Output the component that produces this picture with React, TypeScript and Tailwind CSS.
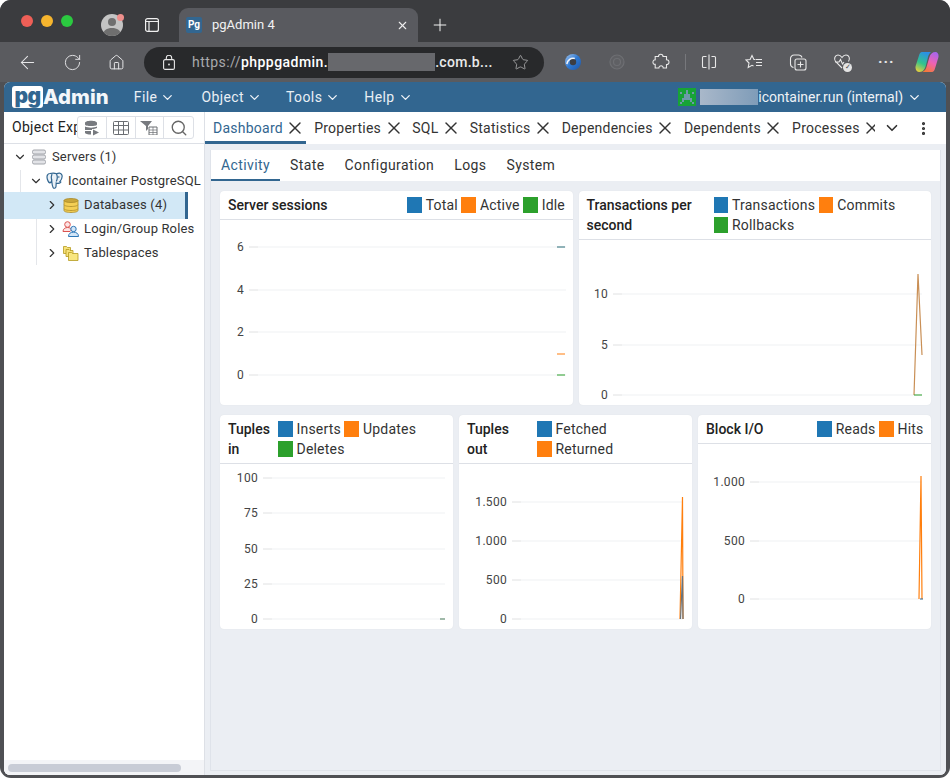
import { ArrowLeft, ChevronDown, ChevronRight, EllipsisVertical, Home, Plus, RotateCw, Search, Star, X } from "lucide-react";

const BLUE = "#1f77b4";
const ORANGE = "#ff7f0e";
const GREEN = "#2ca02c";

type Seg = { points: string; color: string };
type ChartProps = {
  height: number;
  labelRight: number;
  gridRight: number;
  ticks: [string, number][];
  lines: Seg[];
};

function Chart({ height, labelRight, gridRight, ticks, lines }: ChartProps) {
  return (
    <svg className="block w-full" height={height} style={{ fontFamily: "Roboto, sans-serif" }}>
      {ticks.map(([label, y]) => (
        <g key={label}>
          <line x1={labelRight + 5} x2={gridRight} y1={y} y2={y} stroke="#eff1f3" strokeWidth="1" />
          <line x1={labelRight + 5} x2={labelRight + 14} y1={y} y2={y} stroke="#e8e8e8" strokeWidth="1" />
          <text x={labelRight} y={y + 4} textAnchor="end" fontSize="12" letterSpacing="0.3" fill="#444">
            {label}
          </text>
        </g>
      ))}
      {lines.map((l, i) => (
        <polyline key={i} points={l.points} fill="none" stroke={l.color} strokeWidth="1.2" />
      ))}
    </svg>
  );
}

function Legend({ color, label }: { color: string; label: string }) {
  return (
    <span className="mr-[3.5px] flex h-[20px] items-center gap-[4px]">
      <span className="h-[16px] w-[14.5px] shrink-0" style={{ background: color }} />
      <span className="tracking-[0.2px] text-[#333]">{label}</span>
    </span>
  );
}

function Card({
  title,
  titleClass,
  legendClass,
  legend,
  children,
}: {
  title: string;
  titleClass: string;
  legendClass: string;
  legend: [string, string][];
  children: React.ReactNode;
}) {
  return (
    <div className="h-[214px] overflow-hidden rounded-[4px] bg-white shadow-[0_0_1px_#d5d9e0]">
      <div className="flex items-start border-b border-[#dde0e6] pb-[4px] pl-[8px] pr-[4px] pt-[4px] text-[14px] leading-[20px]">
        <div className={`font-medium text-[#222] ${titleClass}`}>{title}</div>
        <div className={`flex flex-1 flex-wrap ${legendClass}`}>
          {legend.map(([c, l]) => (
            <Legend key={l} color={c} label={l} />
          ))}
        </div>
      </div>
      {children}
    </div>
  );
}

function TreeRow({ indent, chevron, icon, label, selected }: { indent: string; chevron: "down" | "right"; icon: React.ReactNode; label: string; selected?: boolean }) {
  return (
    <div className={`relative flex items-center ${selected ? "-my-[1.5px] h-[27px] w-[184px] border-r-[3px] border-[#326690] bg-[#d2e8f6]" : "h-[24px]"} ${indent} whitespace-nowrap text-[13px] tracking-[0.15px] text-[#333]`}>
      {chevron === "down" ? <ChevronDown size={14} className="mr-[3px] shrink-0 text-[#333]" /> : <ChevronRight size={14} className="mr-[3px] shrink-0 text-[#333]" />}
      <span className="mr-[4px] flex h-[18px] w-[18px] shrink-0 items-center justify-center">{icon}</span>
      {label}
    </div>
  );
}

const ServersIcon = () => (
  <svg width="16" height="16" viewBox="0 0 16 16" fill="#e2e3e7" stroke="#a2a5ab" strokeWidth="1">
    <rect x="1.500" y="1" width="13" height="4" rx="1.500" />
    <rect x="1.500" y="6" width="13" height="4" rx="1.500" />
    <rect x="1.500" y="11" width="13" height="4" rx="1.500" />
  </svg>
);
const ElephantIcon = () => (
  <svg width="18" height="18" viewBox="0 0 18 18" fill="#eaf1f7" stroke="#336791" strokeWidth="1.200">
    <path d="M4 1.500C1.500 1.500.5 4 1.300 7c.6 2.200 1.500 3.800 2.700 3.800 1 0 1.300-1.300 1.700-2.300.3 2.200.2 5 1.300 6.800 1 1.500 2.800 1.200 3-.8l.2-3.500c1.500.7 3.200.5 4.300-.5.600-.6.200-1-.5-1 1.500-2 2.600-4.500 1.900-6.500C14.900.5 12.500.800 10.500 1.800 8.500.8 6 1 4 1.500z" />
    <path d="M6 2c-1 2-.8 4.500-.3 6.500M10.500 2c1 2 1 5-.3 7.500" fill="none" />
    <circle cx="12.800" cy="5" r=".8" fill="#336791" stroke="none" />
  </svg>
);
const DatabaseIcon = () => (
  <svg width="16" height="15" viewBox="0 0 16 15" fill="#f4cf55" stroke="#a98a2a" strokeWidth=".8">
    <path d="M1 10.500v2C1 13.800 4.500 14.500 8 14.500s7-.7 7-2v-2z" />
    <path d="M1 6.500v4c0 1.300 3.500 2 7 2s7-.7 7-2v-4z" />
    <path d="M1 2.500v4c0 1.300 3.500 2 7 2s7-.7 7-2v-4z" />
    <ellipse cx="8" cy="2.500" rx="7" ry="2" fill="#c9a63a" />
  </svg>
);
const RolesIcon = () => (
  <svg width="18" height="16" viewBox="0 0 18 16" fill="none">
    <circle cx="5.500" cy="3.500" r="2.800" fill="#fde4e4" stroke="#d9534f" />
    <path d="M1 10.500c0-2.500 2-4 4.500-4S9 7.500 9.500 9L8 10.500z" fill="#fde4e4" stroke="#d9534f" />
    <circle cx="11.500" cy="8" r="2.700" fill="#d3e6f7" stroke="#2f78b7" />
    <path d="M6.500 15.500c0-3 2-4.300 5-4.300s5 1.300 5 4.300z" fill="#d3e6f7" stroke="#2f78b7" />
  </svg>
);
const TablespaceIcon = () => (
  <svg width="16" height="16" viewBox="0 0 16 16" stroke="#b59a20" strokeWidth=".8">
    <path d="M.5 1.500h3l1 1h3v6h-7z" fill="#f7e27a" />
    <path d="M3 4.500h3l1 1h3v6H3z" fill="#f7e27a" />
    <path d="M5.500 7.500h3l1 1h5.500v7H5.500z" fill="#f8e680" />
  </svg>
);

function SideTool({ children, last }: { children: React.ReactNode; last?: boolean }) {
  return <div className={`flex w-[29px] items-center justify-center ${last ? "" : "border-r border-[#dde0e6]"}`}>{children}</div>;
}

function Tab({ label, active }: { label: string; active?: boolean }) {
  return (
    <div className={`flex h-[32px] shrink-0 items-center pl-[8px] pr-[0.7px] ${active ? "border-b-[3px] border-[#326690] pt-[3px] text-[#326690]" : "text-[#333]"}`}>
      <span>{label}</span>
      <X size={20} strokeWidth={1.700} className="ml-[2.5px] text-[#333]" />
    </div>
  );
}

function SubTab({ label, active }: { label: string; active?: boolean }) {
  return (
    <div className={`flex h-[31px] items-center px-[10px] ${active ? "border-b-2 border-[#326690] pt-[2px] text-[#326690]" : "text-[#333]"}`}>
      {label}
    </div>
  );
}

function MenuItem({ label, className }: { label: string; className: string }) {
  return (
    <div className={`flex items-center gap-[3px] text-[#e9eff5] ${className}`}>
      {label}
      <ChevronDown size={15} strokeWidth={2.200} />
    </div>
  );
}

export default function App() {
  return (
    <div className="h-[780px] w-[950px] overflow-hidden bg-white text-[14px]" style={{ fontFamily: "Roboto, sans-serif" }}>
      <div className="flex h-[778px] flex-col overflow-hidden rounded-[11px] bg-[#4f5054]">
        {/* title bar */}
        <div className="flex h-[42px] shrink-0 items-end bg-[#3b3c3f] pl-[21px]">
          <div className="mb-[15px] flex gap-[8px]">
            <span className="h-[12px] w-[12px] rounded-full bg-[#ee5f57]" />
            <span className="h-[12px] w-[12px] rounded-full bg-[#f6b52e]" />
            <span className="h-[12px] w-[12px] rounded-full bg-[#2bc940]" />
          </div>
          <div className="relative mb-[6px] ml-[28px] h-[22px] w-[22px] rounded-full bg-[#c4c4c4]">
            <svg width="22" height="22" viewBox="0 0 22 22" className="overflow-hidden rounded-full">
              <circle cx="11" cy="8" r="4" fill="#6f6f6f" />
              <path d="M2 22c0-6 4-8 9-8s9 2 9 8z" fill="#6f6f6f" />
            </svg>
            <span className="absolute -right-[1px] top-0 h-[7px] w-[7px] rounded-full bg-[#ee8f8c]" />
          </div>
          <svg width="14" height="14" viewBox="0 0 14 14" fill="none" stroke="#f0f0f0" strokeWidth="1.200" className="mb-[10px] ml-[22px]">
            <rect x=".6" y=".6" width="12.800" height="12.800" rx="2" />
            <path d="M.6 3.500h12.800M4 3.500v9.900" />
          </svg>
          <div className="ml-[20px] flex h-[34px] w-[239px] items-center rounded-t-[9px] bg-[#595a5f] pl-[7px] pr-[9px]">
            <span className="flex h-[16px] w-[16px] items-center justify-center rounded-[2px] bg-[#326690] text-[10px] font-bold leading-none text-white">Pg</span>
            <span className="ml-[10px] flex-1 text-[13px] text-[#f2f2f3]">pgAdmin 4</span>
            <X size={13} className="text-[#eeeeee]" />
          </div>
          <Plus size={20} strokeWidth={1.200} className="mb-[7px] ml-[12px] text-[#f2f2f2]" />
        </div>

        {/* toolbar */}
        <div className="flex h-[40px] shrink-0 items-center bg-[#5a5b5f] text-[#e6e6e8]">
          <ArrowLeft size={21} strokeWidth={1.200} className="ml-[17px]" />
          <RotateCw size={19} strokeWidth={1.200} className="ml-[25px]" />
          <Home size={17} strokeWidth={1.400} className="ml-[26px]" />
          <div className="ml-[19px] flex h-[31px] w-[400px] items-center rounded-full bg-[#28292b] pl-[19px] pr-[15px] text-[14px] tracking-[0.45px]">
            <svg width="12" height="15" viewBox="0 0 12 15" fill="none" stroke="#e8e8e8" strokeWidth="1.100" className="mr-[17px]">
              <rect x=".6" y="4.600" width="10.800" height="9.800" rx="1.500" />
              <path d="M3.300 4.500V3a2.700 2.700 0 0 1 5.400 0v1.500" />
              <circle cx="6" cy="9.500" r=".9" fill="#e8e8e8" stroke="none" />
            </svg>
            <span className="text-[#a9aaad]">https://</span>
            <span className="font-medium text-white">phppgadmin.</span>
            <span className="h-[18px] w-[107px] bg-[#67686c]" />
            <span className="font-medium tracking-[0.3px] text-[#e9e9ea]">.com.b...</span>
            <Star size={17} strokeWidth={1.100} className="ml-auto text-[#b5b5b7]" />
          </div>
          <svg width="18" height="18" viewBox="0 0 18 18" className="ml-[20px]" fill="none">
            <defs>
              <linearGradient id="ring" x1="0" y1="0" x2="1" y2="1">
                <stop offset="0" stopColor="#9fc4ee" />
                <stop offset=".5" stopColor="#2f78d0" />
                <stop offset="1" stopColor="#1d56a8" />
              </linearGradient>
            </defs>
            <circle cx="9" cy="9" r="8" fill="url(#ring)" />
            <circle cx="9" cy="9" r="3.200" fill="#3c3d42" />
            <path d="M2.800 11c.8-4 4-6.500 8-5.500" stroke="#f2f5fa" strokeWidth="1.500" />
          </svg>
          <svg width="16" height="16" viewBox="0 0 16 16" className="ml-[27px]" fill="#5f6064" stroke="#6e6f73" strokeWidth="1.200">
            <circle cx="8" cy="8" r="7" />
            <circle cx="8" cy="8" r="3.500" fill="none" />
          </svg>
          <svg width="18" height="18" viewBox="0 0 18 18" className="ml-[27px]" fill="none" stroke="#e8e8e8" strokeWidth="1.100">
            <path d="M6.500 3.500c0-3 4.500-3 4.500 0h3.500v3.300c3.300-.3 3.300 5 0 4.700v3.500h-3.300c.2-3-4.400-3-4.300 0H3.200v-3.600c-3 .4-3-4.800 0-4.600V3.500z" />
          </svg>
          <span className="ml-[15px] h-[16px] w-px bg-[#77787c]" />
          <svg width="16" height="16" viewBox="0 0 16 16" className="ml-[15px]" fill="none" stroke="#e8e8e8" strokeWidth="1.100">
            <path d="M5.500 2.500H2.500a1 1 0 0 0-1 1v9a1 1 0 0 0 1 1h3M10.500 2.500h3a1 1 0 0 1 1 1v9a1 1 0 0 1-1 1h-3M8 .5v15" />
          </svg>
          <svg width="18" height="16" viewBox="0 0 18 16" className="ml-[28px]" fill="none" stroke="#e8e8e8" strokeWidth="1.100">
            <path d="M10.500 5.500H8.900L7 1.500 5.100 5.500 1 6l3 3-.8 4.500L7 11.300l1.500.8M11 5.500h6M11 8.500h6M11 11.500h6" />
          </svg>
          <svg width="18" height="18" viewBox="0 0 18 18" className="ml-[26px]" fill="none" stroke="#e8e8e8" strokeWidth="1.100">
            <rect x="6" y="6" width="11" height="11" rx="2" />
            <path d="M11.500 8.500v6M8.500 11.500h6M4.500 14.500C2.500 14 1.500 12.500 1.500 11V5.500a3.500 3.500 0 0 1 3.500-3.500h4.500c1.500 0 3 1 3.500 2.500" />
          </svg>
          <div className="relative ml-[26px] h-[18px] w-[19px]">
            <svg width="19" height="18" viewBox="0 0 19 18" fill="none" stroke="#e8e8e8" strokeWidth="1.100">
              <path d="M9 15 2.500 8.500C.500 6 2 2 5 2c2 0 3 1 4 2.500C10 3 11 2 13 2c3 0 4.500 3.500 2.500 6.500M2 9h4l1.500-2.500L9.500 11l1.500-2" />
            </svg>
            <span className="absolute -bottom-[1px] right-0 flex h-[9px] w-[9px] items-center justify-center rounded-full bg-[#e4e4e4] text-[7px] leading-none text-[#444]">✓</span>
          </div>
          <span className="ml-[26px] text-[15px] font-bold leading-none tracking-[1px]">···</span>
          <svg width="24" height="24" viewBox="0 0 24 24" className="ml-[20px]">
            <defs>
              <linearGradient id="cp1" x1="0.6" y1="0" x2="0.2" y2="1">
                <stop offset="0" stopColor="#2b8fe8" />
                <stop offset=".55" stopColor="#31c48d" />
                <stop offset="1" stopColor="#e8d03c" />
              </linearGradient>
              <linearGradient id="cp2" x1="0.7" y1="0" x2="0.3" y2="1">
                <stop offset="0" stopColor="#a866ec" />
                <stop offset=".5" stopColor="#ee62b4" />
                <stop offset="1" stopColor="#f5793a" />
              </linearGradient>
            </defs>
            <path d="M7 2h9c-1.500 1-2.500 3-3 5l-2 8c-.8 3.500-2.500 7-6.500 7C1.500 22-.3 19 .8 15.500L4 5.500C4.600 3.300 5.500 2 7 2z" fill="url(#cp1)" />
            <path d="M17 22H7.500c2-1 3.500-3 4-5l3-10C15.200 4 17.500 2 20.500 2 23 2 24.200 5 23.200 8L20 18.500C19.400 20.700 18.500 22 17 22z" fill="url(#cp2)" />
          </svg>
        </div>

        {/* app */}
        <div className="mx-[4px] mb-[3px] flex min-h-0 flex-1 flex-col overflow-hidden rounded-[6px] bg-white">
          <div className="flex h-[30px] shrink-0 items-center bg-[#326690] tracking-[0.4px]">
            <div className="ml-[8px] flex h-[24px] items-center font-['Inter']">
              <span className="flex h-[22px] w-[31px] items-center justify-center rounded-[3px] bg-white pb-[3px] text-[21px] font-black leading-none tracking-[-0.5px] text-[#326690]">pg</span>
              <span className="text-[20.3px] font-extrabold leading-none tracking-[0.1px] text-[#f4f7fa]">Admin</span>
            </div>
            <MenuItem label="File" className="ml-[25px]" />
            <MenuItem label="Object" className="ml-[26px]" />
            <MenuItem label="Tools" className="ml-[24px]" />
            <MenuItem label="Help" className="ml-[24px]" />
            <div className="ml-auto mr-[24px] flex items-center tracking-normal text-[#eef2f6]">
              <svg width="18" height="18" viewBox="0 0 9 9" className="mr-[4px]" shapeRendering="crispEdges">
                <rect width="9" height="9" fill="#17a336" />
                <path d="M4 1h1v2H4zM1 2h1v1H1zM7 2h1v1H7zM3 3h3v3H3zM2 5h1v2H2zM6 5h1v2H6zM1 7h1v1H1zM7 7h1v1H7z" fill="#6d9aa8" />
              </svg>
              <span className="h-[16px] w-[58px] bg-gradient-to-r from-[#a9b8ca] to-[#7f9cb8]" />
              <span>icontainer.run (internal)</span>
              <ChevronDown size={15} strokeWidth={2.200} className="ml-[4px]" />
            </div>
          </div>

          <div className="flex min-h-0 flex-1">
            {/* object explorer */}
            <div className="flex w-[201px] shrink-0 flex-col border-r border-[#dde0e6] bg-white">
              <div className="flex h-[32px] shrink-0 items-center border-b border-[#dde0e6] pl-[8px] tracking-[0.3px] text-[#222]">
                <span className="w-[65px] overflow-hidden whitespace-nowrap">Object Explorer</span>
                <div className="flex h-[23px] w-[117px] rounded-[3px] border border-[#dde0e6] bg-white">
                  <SideTool>
                    <svg width="16" height="16" viewBox="0 0 16 16" fill="#777a7f">
                      <path d="M1 3c0-3 12-3 12 0v1.500c0 2-12 2-12 0zM1 6.500c3 1.500 9 1.500 12 0V8c-1 .5-3 1-5 1v1H1zM1 11h6v3.500C4 14.500 1 14 1 12.500z" />
                      <path d="M9 9.500l6 3-6 3z" />
                    </svg>
                  </SideTool>
                  <SideTool>
                    <svg width="16" height="14" viewBox="0 0 16 14" fill="none" stroke="#6b6e73">
                      <rect x=".5" y=".5" width="15" height="13" rx="1" />
                      <path d="M.5 4.500h15M.5 9h15M5.500.5v13M10.500.5v13" />
                    </svg>
                  </SideTool>
                  <SideTool>
                    <svg width="18" height="15" viewBox="0 0 18 15" fill="#777a7f">
                      <path d="M0 1h12L8 6v3L6 11V6z" />
                      <path d="M9 7h8v8H9z" fill="none" stroke="#6b6e73" />
                      <path d="M9 10h8M13 7v8M9 12.500h8" stroke="#6b6e73" strokeWidth=".7" />
                    </svg>
                  </SideTool>
                  <SideTool last>
                    <Search size={18} strokeWidth={1.800} className="text-[#666]" />
                  </SideTool>
                </div>
              </div>
              <div className="relative flex-1 pt-[1px]">
                <span className="absolute left-[16px] top-[26px] h-[22px] w-px bg-[#e4e6ea]" />
                <span className="absolute left-[32px] top-[75px] h-[46px] w-px bg-[#e4e6ea]" />
                <TreeRow indent="pl-[9px]" chevron="down" icon={<ServersIcon />} label="Servers (1)" />
                <TreeRow indent="pl-[25px]" chevron="down" icon={<ElephantIcon />} label="Icontainer PostgreSQL" />
                <TreeRow indent="pl-[41px]" chevron="right" icon={<DatabaseIcon />} label="Databases (4)" selected />
                <TreeRow indent="pl-[41px]" chevron="right" icon={<RolesIcon />} label="Login/Group Roles" />
                <TreeRow indent="pl-[41px]" chevron="right" icon={<TablespaceIcon />} label="Tablespaces" />
              </div>
              <div className="flex h-[15px] shrink-0 items-center bg-[#f3f4f7] pl-[4px]">
                <span className="h-[8px] w-[173px] rounded-full bg-[#c8ccd6]" />
              </div>
            </div>

            {/* dashboard */}
            <div className="flex min-w-0 flex-1 flex-col bg-[#ebeef3]">
              <div className="flex h-[32px] shrink-0 items-center bg-white tracking-[0.25px]">
                <div className="flex w-[670px] overflow-hidden">
                  <Tab label="Dashboard" active />
                  <Tab label="Properties" />
                  <Tab label="SQL" />
                  <Tab label="Statistics" />
                  <Tab label="Dependencies" />
                  <Tab label="Dependents" />
                  <Tab label="Processes" />
                </div>
                <ChevronDown size={18} strokeWidth={2.200} className="ml-[8px] text-[#333]" />
                <EllipsisVertical size={17} strokeWidth={2.500} className="ml-[14px] text-[#333]" />
              </div>
              <div className="mx-[5px] mb-[4px] mt-[6px] flex min-h-0 flex-1 flex-col border border-t-0 border-[#dfe3ea]">
                <div className="flex h-[31px] shrink-0 bg-white tracking-[0.4px]">
                  <SubTab label="Activity" active />
                  <SubTab label="State" />
                  <SubTab label="Configuration" />
                  <SubTab label="Logs" />
                  <SubTab label="System" />
                </div>
                <div className="flex flex-col gap-[10px] px-[9px] pt-[10px]">
                  <div className="grid grid-cols-2 gap-[6px]">
                    <Card title="Server sessions" titleClass="w-[140px]" legendClass="justify-end" legend={[[BLUE, "Total"], [ORANGE, "Active"], [GREEN, "Idle"]]}>
                      <Chart
                        height={185}
                        labelRight={24}
                        gridRight={346}
                        ticks={[["6", 27], ["4", 70], ["2", 112], ["0", 155]]}
                        lines={[
                          { points: "337,27 345,27", color: "#2a6d78" },
                          { points: "337,134 345,134", color: ORANGE },
                          { points: "337,155 345,155", color: GREEN },
                        ]}
                      />
                    </Card>
                    <Card title="Transactions per second" titleClass="w-[127px]" legendClass="" legend={[[BLUE, "Transactions"], [ORANGE, "Commits"], [GREEN, "Rollbacks"]]}>
                      <Chart
                        height={165}
                        labelRight={29}
                        gridRight={343}
                        ticks={[["10", 54], ["5", 105], ["0", 155]]}
                        lines={[
                          { points: "335,155 339,34 343,115", color: "#c98f55" },
                          { points: "335,155 343,155", color: GREEN },
                        ]}
                      />
                    </Card>
                  </div>
                  <div className="grid grid-cols-3 gap-[6px]">
                    <Card title="Tuples in" titleClass="w-[50px] pr-[8px]" legendClass="" legend={[[BLUE, "Inserts"], [ORANGE, "Updates"], [GREEN, "Deletes"]]}>
                      <Chart
                        height={165}
                        labelRight={38}
                        gridRight={225}
                        ticks={[["100", 14], ["75", 49], ["50", 85], ["25", 120], ["0", 155]]}
                        lines={[{ points: "220,155 225,155", color: "#4a7a5a" }]}
                      />
                    </Card>
                    <Card title="Tuples out" titleClass="w-[70px] pr-[20px]" legendClass="" legend={[[BLUE, "Fetched"], [ORANGE, "Returned"]]}>
                      <Chart
                        height={165}
                        labelRight={48}
                        gridRight={224}
                        ticks={[["1.500", 38], ["1.000", 77], ["500", 116], ["0", 155]]}
                        lines={[
                          { points: "221,155 223.500,33 224,155", color: ORANGE },
                          { points: "221.500,155 223.500,112 224,155", color: "#6a747c" },
                        ]}
                      />
                    </Card>
                    <Card title="Block I/O" titleClass="w-[90px]" legendClass="justify-end" legend={[[BLUE, "Reads"], [ORANGE, "Hits"]]}>
                      <Chart
                        height={185}
                        labelRight={47}
                        gridRight={224}
                        ticks={[["1.000", 38], ["500", 97], ["0", 155]]}
                        lines={[
                          { points: "221,155 223,32 224,155", color: ORANGE },
                          { points: "222,155 225,155", color: "#326690" },
                        ]}
                      />
                    </Card>
                  </div>
                </div>
              </div>
            </div>
          </div>
        </div>
      </div>
    </div>
  );
}
